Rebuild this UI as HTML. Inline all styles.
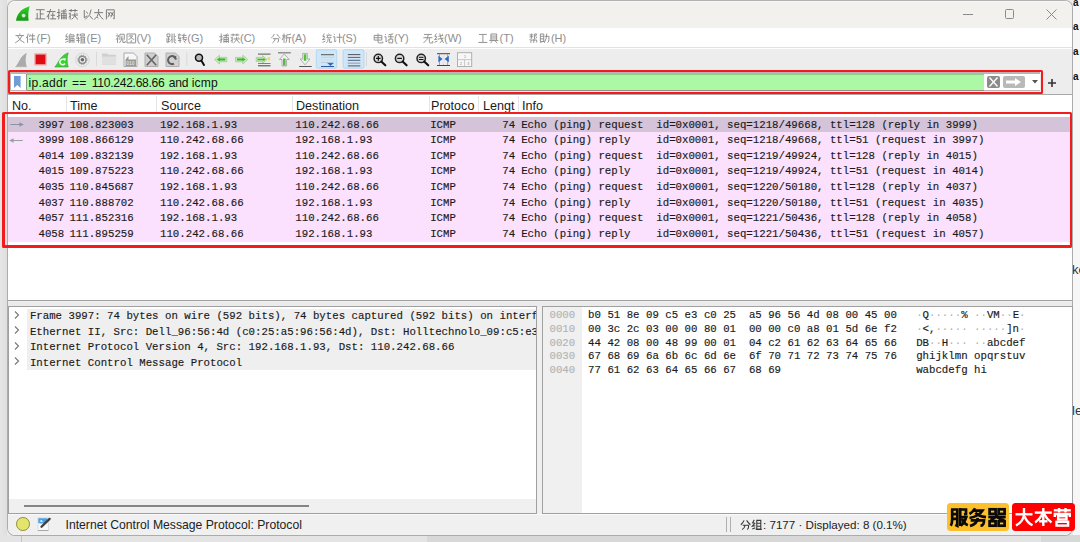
<!DOCTYPE html><html><head><meta charset="utf-8"><style>*{margin:0;padding:0;box-sizing:border-box}
html,body{width:1080px;height:542px;overflow:hidden;background:#ebebeb;font-family:"Liberation Sans",sans-serif;position:relative}
.a{position:absolute;white-space:pre}
.m{font-family:"Liberation Mono",monospace}
.pt{font-size:10.72px;line-height:14px;color:#1a1a1a;-webkit-text-stroke:0.15px #1a1a1a}
.sel{left:8px;width:1064px;height:15.6px;background:#d5c3d9}
.pk{left:8px;width:1064px;height:15.6px;background:#fbe1fd}
.menu{top:31px;font-size:11px;color:#8e8e8e;line-height:14px}
.hd{top:98.5px;font-size:12.6px;color:#1a1a1a;line-height:14px}
.dt{font-size:10.72px;line-height:14px;color:#1a1a1a;-webkit-text-stroke:0.15px #1a1a1a}
.bt{font-size:10.73px;line-height:13px;color:#1a1a1a;-webkit-text-stroke:0.15px #1a1a1a}
.off{color:#b4b4b4;-webkit-text-stroke:0.15px #b4b4b4}
.dot{color:#b0b0b0;-webkit-text-stroke:0 #b0b0b0}
</style></head><body>
<!-- desktop -->
<div class="a" style="left:0;top:0;width:7px;height:542px;background:linear-gradient(90deg,#e6e6e6,#dedede)"></div>
<div class="a" style="left:1073px;top:0;width:7px;height:542px;background:#f7f7f7"></div>
<div class="a" style="left:0;top:535px;width:1080px;height:7px;background:#d8d8d8"></div>
<div class="a" style="left:0;top:535px;width:427px;height:7px;background:#e4e4e4"></div>
<div class="a" style="left:970px;top:535px;width:71px;height:7px;background:#e3e3e3"></div>
<div class="a" style="left:21px;top:536px;width:1px;height:6px;background:#c4c4c4"></div>
<div class="a" style="left:1073px;top:-3px;font-size:10px;line-height:12px;color:#111;font-weight:bold">a</div>
<div class="a" style="left:1073px;top:21px;font-size:10px;line-height:12px;color:#111;font-weight:bold">a</div>
<div class="a" style="left:1073px;top:46px;font-size:10px;line-height:12px;color:#111;font-weight:bold">a</div>
<div class="a" style="left:1073px;top:71px;font-size:10px;line-height:12px;color:#111;font-weight:bold">a</div>
<div class="a" style="left:1072px;top:263px;font-size:13px;line-height:14px;color:#333">ke</div>
<div class="a" style="left:1072px;top:404px;font-size:13px;line-height:14px;color:#333">le</div>
<!-- window -->
<div class="a" style="left:7px;top:0px;width:1066px;height:535.5px;background:#f0f0f0;border:1px solid #acacac;border-top-color:#b2b2b2;border-radius:8px;overflow:hidden">
</div>
<!-- title bar -->
<div class="a" style="left:8px;top:1px;width:1064px;height:26.7px;background:#f2f1ed;border-radius:7px 7px 0 0;border-top:1px solid #f8f7f5"></div>
<svg class="a" style="left:0;top:0" width="40" height="28" viewBox="0 0 40 28">
  <defs><linearGradient id="gf" x1="0" y1="0" x2="0" y2="1"><stop offset="0" stop-color="#2fcf2a"/><stop offset="1" stop-color="#139a12"/></linearGradient></defs>
  <path d="M16 20.8 C16.8 14.5 20.5 9 29.6 6.3 C28.2 11 28.1 16 28.6 20.8 Z" fill="url(#gf)"/>
  <circle cx="23.6" cy="15.6" r="1.9" fill="#cfe8cf"/>
</svg>

<!-- window buttons -->
<div class="a" style="left:963px;top:14px;width:9.5px;height:1px;background:#8a8a8a"></div>
<div class="a" style="left:1004.5px;top:9px;width:9.5px;height:9.5px;border:1px solid #8a8a8a;border-radius:1.5px"></div>
<svg class="a" style="left:1046px;top:9px" width="11" height="11" viewBox="0 0 11 11"><path d="M0.5 0.5 L10.5 10.5 M10.5 0.5 L0.5 10.5" stroke="#8a8a8a" stroke-width="1"/></svg>
<!-- menu bar -->
<div class="a" style="left:8px;top:27.7px;width:1064px;height:19.3px;background:#fff"></div>
<div class="a menu" style="left:36.6px">(F)</div>
<div class="a menu" style="left:86.5px">(E)</div>
<div class="a menu" style="left:136.5px">(V)</div>
<div class="a menu" style="left:187.3px">(G)</div>
<div class="a menu" style="left:240.0px">(C)</div>
<div class="a menu" style="left:291.4px">(A)</div>
<div class="a menu" style="left:341.9px">(S)</div>
<div class="a menu" style="left:394.1px">(Y)</div>
<div class="a menu" style="left:444.0px">(W)</div>
<div class="a menu" style="left:499.6px">(T)</div>
<div class="a menu" style="left:550.9px">(H)</div>
<!-- toolbar -->
<div class="a" style="left:8px;top:47px;width:1064px;height:47px;background:#ededed"></div>
<div class="a" style="left:8px;top:47px;width:1064px;height:1px;background:#e2e2e2"></div>
<div class="a" style="left:8px;top:48px;width:1064px;height:1.3px;background:#fdfdfd"></div>
<svg class="a" style="left:0;top:0" width="480" height="70" viewBox="0 0 480 70">
 <!-- gray fin -->
 <path d="M15.2 67 C18.5 64 20 56 26.8 52.8 C25.3 57.5 25.3 62.5 26.8 67 Z" fill="#ababab"/><path d="M15.2 67 H26.8" stroke="#d0d0d0" stroke-width="0.6"/>
 <!-- red stop -->
 <rect x="34.2" y="53.2" width="12.6" height="12.4" fill="#eeb0b0"/>
 <rect x="35.6" y="54.6" width="9.8" height="9.6" fill="#de0c14"/>
 <!-- green fin restart -->
 <path d="M54.8 67 C58.2 64 59.5 56 68.2 52.8 C66.8 57.5 66.8 62.5 68.2 67 Z" fill="#36d52e" stroke="#4f8f4a" stroke-width="0.6"/>
 <path d="M64.5 59.8 A2.8 2.8 0 1 0 65 63.5" fill="none" stroke="#f2fff2" stroke-width="1.5"/>
 <path d="M63.2 58.2 L66.2 58.6 L64.8 61.2 Z" fill="#f2fff2"/>
 <!-- gear -->
 <circle cx="82.4" cy="59.8" r="6.8" fill="#eeeeee" stroke="#d2d2d2" stroke-width="0.9"/>
 <circle cx="82.4" cy="59.8" r="4.6" fill="none" stroke="#9a9a9a" stroke-width="1" stroke-dasharray="1.4 1"/>
 <circle cx="82.4" cy="59.8" r="3.6" fill="none" stroke="#8a8a8a" stroke-width="1.5"/>
 <circle cx="82.4" cy="59.8" r="1.8" fill="#666"/>
 <!-- separator -->
 <rect x="96" y="52" width="1" height="14" fill="#d9d9d9"/>
 <!-- folder -->
 <path d="M102 53.5 H107 L108.5 54.8 H116 V64.7 H102 Z" fill="#cfcfcf"/>
 <rect x="102" y="56.5" width="14.2" height="8.2" fill="#e0e0e0"/>
 <!-- 010 file -->
 <path d="M124 53 H133.5 L137 56.5 V66.5 H124 Z" fill="#f7f7f7" stroke="#a3a3a3" stroke-width="0.9"/>
 <path d="M125.5 59.5 L128.5 56 V59.5 H136 V66 H125.5 Z" fill="#9a9a9a"/>
 <text x="130.5" y="65.3" font-size="4.6" font-family="Liberation Mono" text-anchor="middle" fill="#f0f0f0">010</text>
 <!-- close file -->
 <path d="M145 53 H154.5 L158 56.5 V66.5 H145 Z" fill="#cfcfcf" stroke="#a9a9a9" stroke-width="0.9"/>
 <path d="M146.8 54.8 L156.2 65.2 M156.2 54.8 L146.8 65.2" stroke="#666" stroke-width="1.7"/>
 <!-- reload file -->
 <path d="M166 53 H175.5 L179 56.5 V66.5 H166 Z" fill="#d2d2d2" stroke="#a9a9a9" stroke-width="0.9"/>
 <path d="M176 59.5 A4 4 0 1 0 174 63.6" fill="none" stroke="#5e5e5e" stroke-width="2"/>
 <path d="M172 55.5 L176.5 56 L175 59.5 Z" fill="#5e5e5e"/>
 <!-- separator -->
 <rect x="186.3" y="52" width="1" height="14" fill="#d9d9d9"/>
 <!-- find -->
 <circle cx="199" cy="57.8" r="3.5" fill="#bdbdbd" stroke="#111" stroke-width="1.5"/>
 <path d="M201.3 60.5 L204 65" stroke="#111" stroke-width="2" stroke-linecap="round"/>
 <!-- back -->
 <path d="M214.6 59.6 L219.5 55.2 V57.4 H226.8 V61.8 H219.5 V64 Z" fill="#c4ecb4" stroke="#a3c99a" stroke-width="0.8"/>
 <path d="M216.8 59.6 L219.8 57.6 V58.6 H225.3 V60.6 H219.8 V61.6 Z" fill="#3ab52c"/>
 <!-- forward -->
 <path d="M247.7 59.6 L242.8 55.2 V57.4 H235.5 V61.8 H242.8 V64 Z" fill="#c4ecb4" stroke="#a3c99a" stroke-width="0.8"/>
 <path d="M245.5 59.6 L242.5 57.6 V58.6 H237 V60.6 H242.5 V61.6 Z" fill="#3ab52c"/>
 <!-- go to packet -->
 <rect x="258" y="53.6" width="12.5" height="1" fill="#555"/>
 <path d="M256.2 57.4 H262.5 V55.6 L267 59.5 L262.5 63.4 V61.6 H256.2 Z" fill="#c4ecb4" stroke="#a3c99a" stroke-width="0.8"/>
 <path d="M257.5 58.7 H263.5 V57.8 L265.5 59.5 L263.5 61.2 V60.3 H257.5 Z" fill="#3ab52c"/>
 <rect x="267.5" y="57.3" width="2.6" height="3" fill="#e8e14a"/>
 <rect x="258" y="63" width="12.5" height="0.9" fill="#777"/>
 <rect x="258" y="65.3" width="12.5" height="1" fill="#444"/>
 <!-- first packet -->
 <rect x="278" y="52.4" width="12.8" height="0.9" fill="#555"/>
 <path d="M284.3 54 L289.2 59.5 H286.6 V66 H282 V59.5 H279.4 Z" fill="#f2f2f2" stroke="#a0a0a0" stroke-width="0.8"/>
 <rect x="283" y="58.5" width="2.6" height="7" fill="#4fbf3c"/>
 <!-- last packet -->
 <path d="M305 64.8 L309.9 59 H307.3 V53.4 H302.7 V59 H300.1 Z" fill="#f2f2f2" stroke="#a0a0a0" stroke-width="0.8"/>
 <rect x="303.8" y="54.3" width="2.5" height="6.5" fill="#4fbf3c"/>
 <rect x="299.2" y="66" width="12.5" height="0.9" fill="#444"/>
 <!-- autoscroll (toggled) -->
 <rect x="316.3" y="49.7" width="20.4" height="18.5" rx="1.5" fill="#cde6f8" stroke="#a9d3f3" stroke-width="0.8"/>
 <rect x="321" y="54.2" width="13" height="1" fill="#555"/>
 <rect x="321" y="56.8" width="13" height="0.9" fill="#cfcfc0"/>
 <rect x="321" y="59.4" width="13" height="0.9" fill="#d9e0c8"/>
 <rect x="321" y="62" width="7" height="0.9" fill="#c8c8d8"/>
 <path d="M327 62.8 H334 L330.5 66 Z" fill="#2f6fc0"/>
 <rect x="321" y="66" width="13" height="1" fill="#2d5aa0"/>
 <!-- colorize (toggled) -->
 <rect x="343.1" y="49.7" width="20.9" height="18.5" rx="1.5" fill="#cde6f8" stroke="#a9d3f3" stroke-width="0.8"/>
 <rect x="347.8" y="54.1" width="12.5" height="1" fill="#555"/>
 <rect x="347.8" y="56.9" width="12.5" height="1" fill="#d43535"/>
 <rect x="347.8" y="59.8" width="12.5" height="1" fill="#4a6480"/>
 <rect x="347.8" y="62.6" width="12.5" height="1.1" fill="#a898a8"/>
 <rect x="347.8" y="65.4" width="12.5" height="1" fill="#555"/>
 <!-- separator -->
 <rect x="366" y="52" width="1" height="14" fill="#d9d9d9"/>
 <!-- zoom in -->
 <circle cx="378.3" cy="58.4" r="4.2" fill="#d8d8d8" stroke="#222" stroke-width="1.5"/>
 <path d="M381.3 61.5 L385.3 65.3" stroke="#111" stroke-width="2.1" stroke-linecap="round"/>
 <path d="M376 58.4 H380.6 M378.3 56.1 V60.7" stroke="#111" stroke-width="1.2"/>
 <!-- zoom out -->
 <circle cx="399.6" cy="58.4" r="4.2" fill="#d8d8d8" stroke="#222" stroke-width="1.5"/>
 <path d="M402.6 61.5 L406.6 65.3" stroke="#111" stroke-width="2.1" stroke-linecap="round"/>
 <path d="M397.3 58.4 H401.9" stroke="#111" stroke-width="1.2"/>
 <!-- zoom normal -->
 <circle cx="421.2" cy="58.4" r="4.2" fill="#d8d8d8" stroke="#222" stroke-width="1.5"/>
 <path d="M424.2 61.5 L428.2 65.3" stroke="#111" stroke-width="2.1" stroke-linecap="round"/>
 <path d="M418.9 57.3 H423.5 M418.9 59.5 H423.5" stroke="#111" stroke-width="1"/>
 <!-- resize columns -->
 <rect x="437" y="53.2" width="13" height="1" fill="#444"/>
 <rect x="437" y="65" width="13" height="1" fill="#444"/>
 <rect x="439" y="54.2" width="0.9" height="10.8" fill="#999"/>
 <rect x="443" y="54.2" width="1" height="10.8" fill="#ccc"/>
 <rect x="447.2" y="54.2" width="0.9" height="10.8" fill="#999"/>
 <path d="M438.4 55.8 L442.6 59 L438.4 62.2 Z" fill="#2e67c4"/>
 <path d="M448.8 55.8 L444.6 59 L448.8 62.2 Z" fill="#2e67c4"/>
 <rect x="442.8" y="55" width="1.6" height="9" fill="#dde6f0"/>
 <!-- layout -->
 <rect x="457.5" y="52.7" width="14.2" height="13.8" fill="#f7f7f7" stroke="#a8a8a8" stroke-width="0.9"/>
 <rect x="457.5" y="59.3" width="14.2" height="0.8" fill="#bbb"/>
 <rect x="464.3" y="59.5" width="0.8" height="7" fill="#bbb"/>
 <text x="465" y="58" font-size="3.6" font-family="Liberation Sans" text-anchor="middle" fill="#888">1</text>
 <text x="461" y="64.5" font-size="3.6" font-family="Liberation Sans" text-anchor="middle" fill="#888">2</text>
 <text x="468.3" y="64.5" font-size="3.6" font-family="Liberation Sans" text-anchor="middle" fill="#888">3</text>
</svg>

<!-- filter -->
<div class="a" style="left:8px;top:69.6px;width:1034.8px;height:24px;border:2.4px solid #f21c1c;border-radius:1.5px"></div>
<div class="a" style="left:10.4px;top:72px;width:1029.8px;height:19.2px;background:#bdb3b3"></div>
<div class="a" style="left:11px;top:74.3px;width:1028.6px;height:15.6px;background:#fff"></div>
<div class="a" style="left:25.9px;top:74.3px;width:1px;height:15.6px;background:#8c9c8c"></div>
<div class="a" style="left:26.9px;top:74px;width:957.5px;height:16.9px;background:#abf9a4;border-top:1.2px solid #8fd08b;border-bottom:1.2px solid #9a8c8c"></div>
<svg class="a" style="left:14px;top:76px" width="7" height="12" viewBox="0 0 7 12"><path d="M0 0 H6.6 V12 L3.3 9 L0 12 Z" fill="#6e9dd7"/></svg>
<div class="a" style="left:28.6px;top:75.8px;font-size:12.1px;line-height:14px;color:#111;letter-spacing:0.25px">ip.addr</div><div class="a" style="left:72.1px;top:75.8px;font-size:12.1px;line-height:14px;color:#111;letter-spacing:0px">==</div><div class="a" style="left:91.8px;top:75.8px;font-size:12.1px;line-height:14px;color:#111;letter-spacing:-0.29px">110.242.68.66</div><div class="a" style="left:168.7px;top:75.8px;font-size:12.1px;line-height:14px;color:#111;letter-spacing:-0.2px">and</div><div class="a" style="left:191.8px;top:75.8px;font-size:12.1px;line-height:14px;color:#111;letter-spacing:0.1px">icmp</div>
<div class="a" style="left:987px;top:76px;width:13px;height:12px;background:#8c8c8c;border-radius:2px"></div>
<svg class="a" style="left:987px;top:76px" width="13" height="12" viewBox="0 0 13 12"><path d="M2.5 1.5 L10.5 10.5 M10.5 1.5 L2.5 10.5" stroke="#fff" stroke-width="1.3"/></svg>
<div class="a" style="left:1003px;top:76px;width:21.5px;height:12px;background:#b9b9b9;border-radius:2px"></div>
<svg class="a" style="left:1003px;top:76px" width="22" height="12" viewBox="0 0 22 12"><path d="M3 4.5 H12 V2 L18 6 L12 10 V7.5 H3 Z" fill="#fff"/></svg>
<svg class="a" style="left:1032px;top:80px" width="6" height="3.5" viewBox="0 0 6 3.5"><path d="M0 0 H6 L3 3.5 Z" fill="#555"/></svg>
<svg class="a" style="left:1047.5px;top:78.5px" width="8" height="8" viewBox="0 0 8 8"><path d="M4 0 V8 M0 4 H8" stroke="#333" stroke-width="1.6"/></svg>
<!-- packet list -->
<div class="a" style="left:8px;top:93.8px;width:1064px;height:207.7px;background:#fff;border-top:1px solid #a9a9a9;border-bottom:1px solid #a0a0a0"></div>
<div class="a hd" style="left:12px">No.</div>
<div class="a hd" style="left:70px">Time</div>
<div class="a hd" style="left:161px">Source</div>
<div class="a hd" style="left:296px">Destination</div>
<div class="a hd" style="left:431px">Protoco</div>
<div class="a hd" style="left:483px">Lengt</div>
<div class="a hd" style="left:522px">Info</div>
<div class="a" style="left:66px;top:96px;width:1px;height:17px;background:#e5e5e5"></div>
<div class="a" style="left:156px;top:96px;width:1px;height:17px;background:#e5e5e5"></div>
<div class="a" style="left:292px;top:96px;width:1px;height:17px;background:#e5e5e5"></div>
<div class="a" style="left:429px;top:96px;width:1px;height:17px;background:#e5e5e5"></div>
<div class="a" style="left:478px;top:96px;width:1px;height:17px;background:#e5e5e5"></div>
<div class="a" style="left:518px;top:96px;width:1px;height:17px;background:#e5e5e5"></div>
<div class="a pk" style="top:116.90px;height:124.80px"></div>
<div class="a sel" style="top:116.90px;height:15.60px"></div>
<div class="a m pt" style="top:117.50px;left:38.47px">3997</div>
<div class="a m pt" style="top:117.50px;left:69.40px">108.823003</div>
<div class="a m pt" style="top:117.50px;left:160.00px">192.168.1.93</div>
<div class="a m pt" style="top:117.50px;left:295.30px">110.242.68.66</div>
<div class="a m pt" style="top:117.50px;left:430.20px">ICMP</div>
<div class="a m pt" style="top:117.50px;left:502.24px">74</div>
<div class="a m pt" style="top:117.50px;left:521.20px">Echo</div>
<div class="a m pt" style="top:117.50px;left:553.36px">(ping)</div>
<div class="a m pt" style="top:117.50px;left:598.39px">request</div>
<div class="a m pt" style="top:117.50px;left:656.28px">id=0x0001,</div>
<div class="a m pt" style="top:117.50px;left:727.04px">seq=1218/49668,</div>
<div class="a m pt" style="top:117.50px;left:829.95px">ttl=128</div>
<div class="a m pt" style="top:117.50px;left:881.41px">(reply</div>
<div class="a m pt" style="top:117.50px;left:926.44px">in</div>
<div class="a m pt" style="top:117.50px;left:945.73px">3999)</div>
<div class="a m pt" style="top:133.10px;left:38.47px">3999</div>
<div class="a m pt" style="top:133.10px;left:69.40px">108.866129</div>
<div class="a m pt" style="top:133.10px;left:160.00px">110.242.68.66</div>
<div class="a m pt" style="top:133.10px;left:295.30px">192.168.1.93</div>
<div class="a m pt" style="top:133.10px;left:430.20px">ICMP</div>
<div class="a m pt" style="top:133.10px;left:502.24px">74</div>
<div class="a m pt" style="top:133.10px;left:521.20px">Echo</div>
<div class="a m pt" style="top:133.10px;left:553.36px">(ping)</div>
<div class="a m pt" style="top:133.10px;left:598.39px">reply</div>
<div class="a m pt" style="top:133.10px;left:656.28px">id=0x0001,</div>
<div class="a m pt" style="top:133.10px;left:727.04px">seq=1218/49668,</div>
<div class="a m pt" style="top:133.10px;left:829.95px">ttl=51</div>
<div class="a m pt" style="top:133.10px;left:874.98px">(request</div>
<div class="a m pt" style="top:133.10px;left:932.87px">in</div>
<div class="a m pt" style="top:133.10px;left:952.17px">3997)</div>
<div class="a m pt" style="top:148.70px;left:38.47px">4014</div>
<div class="a m pt" style="top:148.70px;left:69.40px">109.832139</div>
<div class="a m pt" style="top:148.70px;left:160.00px">192.168.1.93</div>
<div class="a m pt" style="top:148.70px;left:295.30px">110.242.68.66</div>
<div class="a m pt" style="top:148.70px;left:430.20px">ICMP</div>
<div class="a m pt" style="top:148.70px;left:502.24px">74</div>
<div class="a m pt" style="top:148.70px;left:521.20px">Echo</div>
<div class="a m pt" style="top:148.70px;left:553.36px">(ping)</div>
<div class="a m pt" style="top:148.70px;left:598.39px">request</div>
<div class="a m pt" style="top:148.70px;left:656.28px">id=0x0001,</div>
<div class="a m pt" style="top:148.70px;left:727.04px">seq=1219/49924,</div>
<div class="a m pt" style="top:148.70px;left:829.95px">ttl=128</div>
<div class="a m pt" style="top:148.70px;left:881.41px">(reply</div>
<div class="a m pt" style="top:148.70px;left:926.44px">in</div>
<div class="a m pt" style="top:148.70px;left:945.73px">4015)</div>
<div class="a m pt" style="top:164.30px;left:38.47px">4015</div>
<div class="a m pt" style="top:164.30px;left:69.40px">109.875223</div>
<div class="a m pt" style="top:164.30px;left:160.00px">110.242.68.66</div>
<div class="a m pt" style="top:164.30px;left:295.30px">192.168.1.93</div>
<div class="a m pt" style="top:164.30px;left:430.20px">ICMP</div>
<div class="a m pt" style="top:164.30px;left:502.24px">74</div>
<div class="a m pt" style="top:164.30px;left:521.20px">Echo</div>
<div class="a m pt" style="top:164.30px;left:553.36px">(ping)</div>
<div class="a m pt" style="top:164.30px;left:598.39px">reply</div>
<div class="a m pt" style="top:164.30px;left:656.28px">id=0x0001,</div>
<div class="a m pt" style="top:164.30px;left:727.04px">seq=1219/49924,</div>
<div class="a m pt" style="top:164.30px;left:829.95px">ttl=51</div>
<div class="a m pt" style="top:164.30px;left:874.98px">(request</div>
<div class="a m pt" style="top:164.30px;left:932.87px">in</div>
<div class="a m pt" style="top:164.30px;left:952.17px">4014)</div>
<div class="a m pt" style="top:179.90px;left:38.47px">4035</div>
<div class="a m pt" style="top:179.90px;left:69.40px">110.845687</div>
<div class="a m pt" style="top:179.90px;left:160.00px">192.168.1.93</div>
<div class="a m pt" style="top:179.90px;left:295.30px">110.242.68.66</div>
<div class="a m pt" style="top:179.90px;left:430.20px">ICMP</div>
<div class="a m pt" style="top:179.90px;left:502.24px">74</div>
<div class="a m pt" style="top:179.90px;left:521.20px">Echo</div>
<div class="a m pt" style="top:179.90px;left:553.36px">(ping)</div>
<div class="a m pt" style="top:179.90px;left:598.39px">request</div>
<div class="a m pt" style="top:179.90px;left:656.28px">id=0x0001,</div>
<div class="a m pt" style="top:179.90px;left:727.04px">seq=1220/50180,</div>
<div class="a m pt" style="top:179.90px;left:829.95px">ttl=128</div>
<div class="a m pt" style="top:179.90px;left:881.41px">(reply</div>
<div class="a m pt" style="top:179.90px;left:926.44px">in</div>
<div class="a m pt" style="top:179.90px;left:945.73px">4037)</div>
<div class="a m pt" style="top:195.50px;left:38.47px">4037</div>
<div class="a m pt" style="top:195.50px;left:69.40px">110.888702</div>
<div class="a m pt" style="top:195.50px;left:160.00px">110.242.68.66</div>
<div class="a m pt" style="top:195.50px;left:295.30px">192.168.1.93</div>
<div class="a m pt" style="top:195.50px;left:430.20px">ICMP</div>
<div class="a m pt" style="top:195.50px;left:502.24px">74</div>
<div class="a m pt" style="top:195.50px;left:521.20px">Echo</div>
<div class="a m pt" style="top:195.50px;left:553.36px">(ping)</div>
<div class="a m pt" style="top:195.50px;left:598.39px">reply</div>
<div class="a m pt" style="top:195.50px;left:656.28px">id=0x0001,</div>
<div class="a m pt" style="top:195.50px;left:727.04px">seq=1220/50180,</div>
<div class="a m pt" style="top:195.50px;left:829.95px">ttl=51</div>
<div class="a m pt" style="top:195.50px;left:874.98px">(request</div>
<div class="a m pt" style="top:195.50px;left:932.87px">in</div>
<div class="a m pt" style="top:195.50px;left:952.17px">4035)</div>
<div class="a m pt" style="top:211.10px;left:38.47px">4057</div>
<div class="a m pt" style="top:211.10px;left:69.40px">111.852316</div>
<div class="a m pt" style="top:211.10px;left:160.00px">192.168.1.93</div>
<div class="a m pt" style="top:211.10px;left:295.30px">110.242.68.66</div>
<div class="a m pt" style="top:211.10px;left:430.20px">ICMP</div>
<div class="a m pt" style="top:211.10px;left:502.24px">74</div>
<div class="a m pt" style="top:211.10px;left:521.20px">Echo</div>
<div class="a m pt" style="top:211.10px;left:553.36px">(ping)</div>
<div class="a m pt" style="top:211.10px;left:598.39px">request</div>
<div class="a m pt" style="top:211.10px;left:656.28px">id=0x0001,</div>
<div class="a m pt" style="top:211.10px;left:727.04px">seq=1221/50436,</div>
<div class="a m pt" style="top:211.10px;left:829.95px">ttl=128</div>
<div class="a m pt" style="top:211.10px;left:881.41px">(reply</div>
<div class="a m pt" style="top:211.10px;left:926.44px">in</div>
<div class="a m pt" style="top:211.10px;left:945.73px">4058)</div>
<div class="a m pt" style="top:226.70px;left:38.47px">4058</div>
<div class="a m pt" style="top:226.70px;left:69.40px">111.895259</div>
<div class="a m pt" style="top:226.70px;left:160.00px">110.242.68.66</div>
<div class="a m pt" style="top:226.70px;left:295.30px">192.168.1.93</div>
<div class="a m pt" style="top:226.70px;left:430.20px">ICMP</div>
<div class="a m pt" style="top:226.70px;left:502.24px">74</div>
<div class="a m pt" style="top:226.70px;left:521.20px">Echo</div>
<div class="a m pt" style="top:226.70px;left:553.36px">(ping)</div>
<div class="a m pt" style="top:226.70px;left:598.39px">reply</div>
<div class="a m pt" style="top:226.70px;left:656.28px">id=0x0001,</div>
<div class="a m pt" style="top:226.70px;left:727.04px">seq=1221/50436,</div>
<div class="a m pt" style="top:226.70px;left:829.95px">ttl=51</div>
<div class="a m pt" style="top:226.70px;left:874.98px">(request</div>
<div class="a m pt" style="top:226.70px;left:932.87px">in</div>
<div class="a m pt" style="top:226.70px;left:952.17px">4057)</div>
<svg class="a" style="left:0;top:110px" width="30" height="40" viewBox="0 110 30 40">
 <path d="M10.3 124.5 H20" stroke="#8c93a0" stroke-width="1"/>
 <path d="M19.4 122.3 L23.8 124.5 L19.4 126.7 Z" fill="#8c93a0"/>
 <path d="M13.2 140.5 H22.8" stroke="#95a0a0" stroke-width="1"/>
 <path d="M13.6 138.3 L9.2 140.5 L13.6 142.7 Z" fill="#95a0a0"/>
</svg>
<div class="a" style="left:2.3px;top:111.8px;width:1069.5px;height:136px;border:solid #f21c1c;border-width:2.7px 2.6px 3.3px 3.4px;border-radius:1.5px"></div>
<!-- splitter -->
<div class="a" style="left:8px;top:301.5px;width:1064px;height:5px;background:#ebebeb"></div>
<!-- details pane -->
<div class="a" style="left:7.5px;top:306px;width:529.5px;height:208px;background:#fff;border:1px solid #a0a0a0;border-right-color:#a0a0a0"></div>
<div class="a" style="left:27px;top:308.5px;width:508.8px;height:61px;background:#efefef"></div>
<div class="a" style="left:26.5px;top:307px;width:509.3px;height:190px;overflow:hidden">
<div class="a m dt" style="top:2.00px;left:3.40px">Frame</div>
<div class="a m dt" style="top:2.00px;left:41.99px">3997:</div>
<div class="a m dt" style="top:2.00px;left:80.59px">74</div>
<div class="a m dt" style="top:2.00px;left:99.89px">bytes</div>
<div class="a m dt" style="top:2.00px;left:138.48px">on</div>
<div class="a m dt" style="top:2.00px;left:157.78px">wire</div>
<div class="a m dt" style="top:2.00px;left:189.94px">(592</div>
<div class="a m dt" style="top:2.00px;left:222.10px">bits),</div>
<div class="a m dt" style="top:2.00px;left:267.13px">74</div>
<div class="a m dt" style="top:2.00px;left:286.42px">bytes</div>
<div class="a m dt" style="top:2.00px;left:325.02px">captured</div>
<div class="a m dt" style="top:2.00px;left:382.91px">(592</div>
<div class="a m dt" style="top:2.00px;left:415.07px">bits)</div>
<div class="a m dt" style="top:2.00px;left:453.66px">on</div>
<div class="a m dt" style="top:2.00px;left:472.96px">interface</div>
<div class="a m dt" style="top:2.00px;left:537.28px">\Device\NPF_{...},</div>
<div class="a m dt" style="top:2.00px;left:659.50px">id</div>
<div class="a m dt" style="top:2.00px;left:678.80px">0</div>
<div class="a m dt" style="top:17.50px;left:3.40px">Ethernet</div>
<div class="a m dt" style="top:17.50px;left:61.29px">II,</div>
<div class="a m dt" style="top:17.50px;left:87.02px">Src:</div>
<div class="a m dt" style="top:17.50px;left:119.18px">Dell_96:56:4d</div>
<div class="a m dt" style="top:17.50px;left:209.24px">(c0:25:a5:96:56:4d),</div>
<div class="a m dt" style="top:17.50px;left:344.31px">Dst:</div>
<div class="a m dt" style="top:17.50px;left:376.48px">Holltechnolo_09:c5:e3</div>
<div class="a m dt" style="top:17.50px;left:517.99px">(b0:51:8e:09:c5:e3)</div>
<div class="a m dt" style="top:33.00px;left:3.40px">Internet</div>
<div class="a m dt" style="top:33.00px;left:61.29px">Protocol</div>
<div class="a m dt" style="top:33.00px;left:119.18px">Version</div>
<div class="a m dt" style="top:33.00px;left:170.64px">4,</div>
<div class="a m dt" style="top:33.00px;left:189.94px">Src:</div>
<div class="a m dt" style="top:33.00px;left:222.10px">192.168.1.93,</div>
<div class="a m dt" style="top:33.00px;left:312.15px">Dst:</div>
<div class="a m dt" style="top:33.00px;left:344.31px">110.242.68.66</div>
<div class="a m dt" style="top:48.50px;left:3.40px">Internet</div>
<div class="a m dt" style="top:48.50px;left:61.29px">Control</div>
<div class="a m dt" style="top:48.50px;left:112.75px">Message</div>
<div class="a m dt" style="top:48.50px;left:164.21px">Protocol</div>
</div>
<svg class="a" style="left:13.8px;top:310.90px" width="6" height="8" viewBox="0 0 6 8"><path d="M1 0.5 L4.5 4 L1 7.5" stroke="#777" stroke-width="1.1" fill="none"/></svg>
<svg class="a" style="left:13.8px;top:326.40px" width="6" height="8" viewBox="0 0 6 8"><path d="M1 0.5 L4.5 4 L1 7.5" stroke="#777" stroke-width="1.1" fill="none"/></svg>
<svg class="a" style="left:13.8px;top:341.90px" width="6" height="8" viewBox="0 0 6 8"><path d="M1 0.5 L4.5 4 L1 7.5" stroke="#777" stroke-width="1.1" fill="none"/></svg>
<svg class="a" style="left:13.8px;top:357.40px" width="6" height="8" viewBox="0 0 6 8"><path d="M1 0.5 L4.5 4 L1 7.5" stroke="#777" stroke-width="1.1" fill="none"/></svg>
<div class="a" style="left:8.5px;top:498.5px;width:527.5px;height:14.5px;background:#f0f0f0"></div>
<div class="a" style="left:24px;top:505px;width:285px;height:2px;background:#858585"></div>
<!-- bytes pane -->
<div class="a" style="left:542px;top:306px;width:531px;height:208px;background:#fff;border:1px solid #a0a0a0"></div>
<div class="a" style="left:543px;top:307px;width:38.5px;height:206px;background:#f0f0f0"></div>
<div class="a m bt off" style="top:309.00px;left:549.50px">0000</div>
<div class="a m bt" style="top:309.00px;left:588.09px">b0</div>
<div class="a m bt" style="top:309.00px;left:607.39px">51</div>
<div class="a m bt" style="top:309.00px;left:626.69px">8e</div>
<div class="a m bt" style="top:309.00px;left:645.99px">09</div>
<div class="a m bt" style="top:309.00px;left:665.28px">c5</div>
<div class="a m bt" style="top:309.00px;left:684.58px">e3</div>
<div class="a m bt" style="top:309.00px;left:703.88px">c0</div>
<div class="a m bt" style="top:309.00px;left:723.17px">25</div>
<div class="a m bt" style="top:309.00px;left:748.90px">a5</div>
<div class="a m bt" style="top:309.00px;left:768.20px">96</div>
<div class="a m bt" style="top:309.00px;left:787.50px">56</div>
<div class="a m bt" style="top:309.00px;left:806.79px">4d</div>
<div class="a m bt" style="top:309.00px;left:826.09px">08</div>
<div class="a m bt" style="top:309.00px;left:845.39px">00</div>
<div class="a m bt" style="top:309.00px;left:864.68px">45</div>
<div class="a m bt" style="top:309.00px;left:883.98px">00</div>
<div class="a m bt dot" style="top:309.00px;left:916.14px">·</div>
<div class="a m bt" style="top:309.00px;left:922.58px">Q</div>
<div class="a m bt dot" style="top:309.00px;left:929.01px">·····</div>
<div class="a m bt" style="top:309.00px;left:961.17px">%</div>
<div class="a m bt dot" style="top:309.00px;left:974.03px">··</div>
<div class="a m bt" style="top:309.00px;left:986.90px">VM</div>
<div class="a m bt dot" style="top:309.00px;left:999.76px">··</div>
<div class="a m bt" style="top:309.00px;left:1012.63px">E</div>
<div class="a m bt dot" style="top:309.00px;left:1019.06px">·</div>
<div class="a m bt off" style="top:322.83px;left:549.50px">0010</div>
<div class="a m bt" style="top:322.83px;left:588.09px">00</div>
<div class="a m bt" style="top:322.83px;left:607.39px">3c</div>
<div class="a m bt" style="top:322.83px;left:626.69px">2c</div>
<div class="a m bt" style="top:322.83px;left:645.99px">03</div>
<div class="a m bt" style="top:322.83px;left:665.28px">00</div>
<div class="a m bt" style="top:322.83px;left:684.58px">00</div>
<div class="a m bt" style="top:322.83px;left:703.88px">80</div>
<div class="a m bt" style="top:322.83px;left:723.17px">01</div>
<div class="a m bt" style="top:322.83px;left:748.90px">00</div>
<div class="a m bt" style="top:322.83px;left:768.20px">00</div>
<div class="a m bt" style="top:322.83px;left:787.50px">c0</div>
<div class="a m bt" style="top:322.83px;left:806.79px">a8</div>
<div class="a m bt" style="top:322.83px;left:826.09px">01</div>
<div class="a m bt" style="top:322.83px;left:845.39px">5d</div>
<div class="a m bt" style="top:322.83px;left:864.68px">6e</div>
<div class="a m bt" style="top:322.83px;left:883.98px">f2</div>
<div class="a m bt dot" style="top:322.83px;left:916.14px">·</div>
<div class="a m bt" style="top:322.83px;left:922.58px">&lt;,</div>
<div class="a m bt dot" style="top:322.83px;left:935.44px">·····</div>
<div class="a m bt dot" style="top:322.83px;left:974.03px">·····</div>
<div class="a m bt" style="top:322.83px;left:1006.20px">]n</div>
<div class="a m bt dot" style="top:322.83px;left:1019.06px">·</div>
<div class="a m bt off" style="top:336.66px;left:549.50px">0020</div>
<div class="a m bt" style="top:336.66px;left:588.09px">44</div>
<div class="a m bt" style="top:336.66px;left:607.39px">42</div>
<div class="a m bt" style="top:336.66px;left:626.69px">08</div>
<div class="a m bt" style="top:336.66px;left:645.99px">00</div>
<div class="a m bt" style="top:336.66px;left:665.28px">48</div>
<div class="a m bt" style="top:336.66px;left:684.58px">99</div>
<div class="a m bt" style="top:336.66px;left:703.88px">00</div>
<div class="a m bt" style="top:336.66px;left:723.17px">01</div>
<div class="a m bt" style="top:336.66px;left:748.90px">04</div>
<div class="a m bt" style="top:336.66px;left:768.20px">c2</div>
<div class="a m bt" style="top:336.66px;left:787.50px">61</div>
<div class="a m bt" style="top:336.66px;left:806.79px">62</div>
<div class="a m bt" style="top:336.66px;left:826.09px">63</div>
<div class="a m bt" style="top:336.66px;left:845.39px">64</div>
<div class="a m bt" style="top:336.66px;left:864.68px">65</div>
<div class="a m bt" style="top:336.66px;left:883.98px">66</div>
<div class="a m bt" style="top:336.66px;left:916.14px">DB</div>
<div class="a m bt dot" style="top:336.66px;left:929.01px">··</div>
<div class="a m bt" style="top:336.66px;left:941.87px">H</div>
<div class="a m bt dot" style="top:336.66px;left:948.31px">···</div>
<div class="a m bt dot" style="top:336.66px;left:974.03px">··</div>
<div class="a m bt" style="top:336.66px;left:986.90px">abcdef</div>
<div class="a m bt off" style="top:350.49px;left:549.50px">0030</div>
<div class="a m bt" style="top:350.49px;left:588.09px">67</div>
<div class="a m bt" style="top:350.49px;left:607.39px">68</div>
<div class="a m bt" style="top:350.49px;left:626.69px">69</div>
<div class="a m bt" style="top:350.49px;left:645.99px">6a</div>
<div class="a m bt" style="top:350.49px;left:665.28px">6b</div>
<div class="a m bt" style="top:350.49px;left:684.58px">6c</div>
<div class="a m bt" style="top:350.49px;left:703.88px">6d</div>
<div class="a m bt" style="top:350.49px;left:723.17px">6e</div>
<div class="a m bt" style="top:350.49px;left:748.90px">6f</div>
<div class="a m bt" style="top:350.49px;left:768.20px">70</div>
<div class="a m bt" style="top:350.49px;left:787.50px">71</div>
<div class="a m bt" style="top:350.49px;left:806.79px">72</div>
<div class="a m bt" style="top:350.49px;left:826.09px">73</div>
<div class="a m bt" style="top:350.49px;left:845.39px">74</div>
<div class="a m bt" style="top:350.49px;left:864.68px">75</div>
<div class="a m bt" style="top:350.49px;left:883.98px">76</div>
<div class="a m bt" style="top:350.49px;left:916.14px">ghijklmn</div>
<div class="a m bt" style="top:350.49px;left:974.03px">opqrstuv</div>
<div class="a m bt off" style="top:364.32px;left:549.50px">0040</div>
<div class="a m bt" style="top:364.32px;left:588.09px">77</div>
<div class="a m bt" style="top:364.32px;left:607.39px">61</div>
<div class="a m bt" style="top:364.32px;left:626.69px">62</div>
<div class="a m bt" style="top:364.32px;left:645.99px">63</div>
<div class="a m bt" style="top:364.32px;left:665.28px">64</div>
<div class="a m bt" style="top:364.32px;left:684.58px">65</div>
<div class="a m bt" style="top:364.32px;left:703.88px">66</div>
<div class="a m bt" style="top:364.32px;left:723.17px">67</div>
<div class="a m bt" style="top:364.32px;left:748.90px">68</div>
<div class="a m bt" style="top:364.32px;left:768.20px">69</div>
<div class="a m bt" style="top:364.32px;left:916.14px">wabcdefg</div>
<div class="a m bt" style="top:364.32px;left:974.03px">hi</div>
<!-- status bar -->
<div class="a" style="left:8px;top:514px;width:1064px;height:20.5px;background:#f0f0f0;border-radius:0 0 7px 7px;border-top:1px solid #fafafa"></div>
<div class="a" style="left:16px;top:517.3px;width:13.8px;height:13.8px;border-radius:50%;background:#e4e46c;border:1px solid #8f8f3c"></div>
<svg class="a" style="left:0;top:500px" width="60" height="42" viewBox="0 500 60 42">
 <rect x="38" y="518" width="10.4" height="12.4" fill="#f6f8fa" stroke="#c9ced3" stroke-width="0.6"/>
 <path d="M38.3 518.3 H47.5 V522 Q43 524.5 38.3 523 Z" fill="#4a9fe0"/>
 <path d="M39.5 521.5 L41.5 519.8 L43 522 Z" fill="#e8f4fb"/>
 <path d="M41.5 526.8 L49.6 518.9" stroke="#3e3e3e" stroke-width="2.3" stroke-linecap="round"/>
 <rect x="38" y="530" width="10.4" height="0.8" fill="#9a9a9a"/>
</svg>
<div class="a" style="left:65.5px;top:517.9px;font-size:12.2px;line-height:14px;color:#222">Internet Control Message Protocol: Protocol</div>
<div class="a" style="left:726px;top:517px;width:1px;height:14.5px;background:#b0b0b0"></div>
<div class="a" style="left:729.5px;top:517px;width:1px;height:14.5px;background:#b0b0b0"></div>
<div class="a" style="left:763px;top:517.5px;font-size:11.6px;line-height:14px;color:#222">: 7177 · Displayed: 8 (0.1%)</div>
<!-- badge -->
<div class="a" style="left:946.5px;top:503.1px;width:62.7px;height:27.8px;background:#fcc02c;border-radius:3.5px"></div>
<div class="a" style="left:1011.7px;top:503.3px;width:63px;height:27.4px;background:#ff0000;border-radius:3.5px"></div>
<svg class="a" style="left:0;top:0" width="1080" height="542" viewBox="0 0 1080 542">
 <g fill="none" stroke="#0a0a0a" stroke-width="2.7" stroke-linecap="butt" stroke-linejoin="miter">
  <g transform="translate(950,508)">
   <path d="M2.2 1.5 V11 Q2.2 15.5 0.8 17.8"/>
   <path d="M1 1.5 H7.3 V17.8 L5.3 16.8"/>
   <path d="M2.2 6.2 H7 M2.2 10.8 H7"/>
   <path d="M10.2 0.2 V18"/>
   <path d="M9 1.5 H16 V6 L14 6.3"/>
   <path d="M10.2 9 H16.3 Q14.8 14.5 10.8 17.8"/>
   <path d="M12 10.5 Q13.8 15.5 17.8 17.3"/>
  </g>
  <g transform="translate(968.5,508)">
   <path d="M6.5 0.3 Q5 3.5 1 6"/>
   <path d="M5.2 2.6 H14 Q10.5 8.2 1 10"/>
   <path d="M6.8 4.8 Q10.5 8.5 17.5 9.2"/>
   <path d="M2.2 12.4 H15.5 Q15.5 17.6 12 17.6"/>
   <path d="M9.2 9.8 Q8.8 15.8 1.5 18"/>
  </g>
  <g transform="translate(988,508)">
   <rect x="1.6" y="1.3" width="6" height="4.6"/>
   <rect x="10.6" y="1.3" width="6" height="4.6"/>
   <path d="M0.3 9 H17.7"/>
   <path d="M9.2 6.5 Q8.2 9.5 2.5 12"/>
   <path d="M9.6 9.2 Q12 11.5 16.5 12.2"/>
   <rect x="1.6" y="13.2" width="6" height="4.5"/>
   <rect x="10.6" y="13.2" width="6" height="4.5"/>
  </g>
 </g>
 <g fill="none" stroke="#ffffff" stroke-width="2.4" stroke-linecap="butt" stroke-linejoin="miter">
  <g transform="translate(1015,508)">
   <path d="M0.5 6.3 H17.5"/>
   <path d="M9 0 V6.5 Q8.5 13.5 1 17.5"/>
   <path d="M9.6 8.5 Q12 14.5 17.5 17.3"/>
  </g>
  <g transform="translate(1034.3,508)">
   <path d="M0.5 4.6 H17.5"/>
   <path d="M9 0 V18"/>
   <path d="M8.4 5.5 Q5.8 11 0.8 14.5"/>
   <path d="M9.6 5.5 Q12.2 11 17.2 14.5"/>
   <path d="M4.8 13.3 H13.2"/>
  </g>
  <g transform="translate(1053.3,508)">
   <path d="M0.5 2.3 H17.5"/>
   <path d="M5.8 0 V4.6 M12.2 0 V4.6"/>
   <path d="M1.5 9 V6 H16.5 V9"/>
   <rect x="4.8" y="8.2" width="8.4" height="3.3"/>
   <rect x="3.2" y="13.8" width="11.6" height="3.8"/>
  </g>
 </g>
</svg>
<svg class="a" style="left:0;top:0" width="1080" height="542" viewBox="0 0 1080 542">
<path transform="translate(35.40,9.00) scale(0.980,1.040)" d="M0.5 0.7 H9.5 M5 0.7 V9.5 M5 4.8 H8.5 M1.8 3.8 V9.5 M0 9.5 H10" stroke="#7a7a7a" stroke-width="1.0" vector-effect="non-scaling-stroke" fill="none"/>
<path transform="translate(46.25,9.00) scale(0.980,1.040)" d="M0.5 2.5 H9.5 M4.5 0 Q3.5 5 0.5 8 M2.5 5 V10 M4.5 6 H9 M6.7 3.5 V9.5 M4 9.5 H10" stroke="#7a7a7a" stroke-width="1.0" vector-effect="non-scaling-stroke" fill="none"/>
<path transform="translate(56.90,9.00) scale(0.980,1.040)" d="M0 3.5 H3.5 M2 0 V9.5 L1 9.5 M0 7.5 L3.5 6 M4 2 H10 M8.5 0 L9.3 1.2 M4.8 4 V10 M4.8 4 H9.5 V10 M4.8 6.5 H9.5 M4.8 8.5 H9.5 M7.2 0.5 V10" stroke="#7a7a7a" stroke-width="1.0" vector-effect="non-scaling-stroke" fill="none"/>
<path transform="translate(68.20,9.00) scale(0.980,1.040)" d="M0.5 1.5 H9.5 M3 0 V2.8 M7 0 V2.8 M0.5 4 Q1.5 5 2.5 4.5 M2 3.5 V10 M0.5 8 L2.5 6.5 M3.5 5.8 H10 M6.7 3.5 V5.8 Q6 8.5 3.5 10 M7 6.5 Q8 9 10 10 M8.5 3.8 L9.3 4.6" stroke="#7a7a7a" stroke-width="1.0" vector-effect="non-scaling-stroke" fill="none"/>
<path transform="translate(83.30,9.00) scale(0.980,1.040)" d="M1 1 V8.5 L4 6.5 M3 2.5 L4.5 4.5 M8 0.5 Q8 6 2 10 M6.5 6.5 L9.8 10" stroke="#7a7a7a" stroke-width="1.0" vector-effect="non-scaling-stroke" fill="none"/>
<path transform="translate(93.75,9.00) scale(0.980,1.040)" d="M0.5 3.5 H9.5 M5 0 V3.5 Q4.5 7.5 0.5 10 M5.3 4.5 Q6.5 8 9.8 10 M3.5 7.8 L4.5 9" stroke="#7a7a7a" stroke-width="1.0" vector-effect="non-scaling-stroke" fill="none"/>
<path transform="translate(105.40,9.00) scale(0.980,1.040)" d="M1 10 V0.8 H9 V9.5 L8 9.2 M2.5 3 L5 6.5 M5 3 L2.5 8 M5.5 3 L8 6.5 M8 3 L5.5 8" stroke="#7a7a7a" stroke-width="1.0" vector-effect="non-scaling-stroke" fill="none"/>
<path transform="translate(15.00,33.50) scale(0.960,0.940)" d="M5 0 V1.5 M0.5 2.2 H9.5 M2.5 2.2 Q4.5 7.5 9.8 10 M7.5 2.2 Q5.5 7.5 0.2 10" stroke="#8e8e8e" stroke-width="0.95" vector-effect="non-scaling-stroke" fill="none"/>
<path transform="translate(25.90,33.50) scale(0.960,0.940)" d="M2.5 0 Q2 3 0.3 5 M1.7 3 V10 M4.5 0.8 Q4.3 2.5 3.5 3.5 M4 2.5 H9.5 M3.5 6 H10 M7 0 V10" stroke="#8e8e8e" stroke-width="0.95" vector-effect="non-scaling-stroke" fill="none"/>
<path transform="translate(64.90,33.50) scale(0.960,0.940)" d="M2.5 0 L0.8 3 L3 3.5 L0.5 6.5 L3.5 6 M0.5 9.5 L3.5 8 M5.5 0.2 L6.8 0.8 M4.5 1.5 H9.5 V3.5 H4.5 M4.5 1.5 V10 M5.5 5 H9.5 V10 M5.5 5 V10 M7.5 5 V10 M5.5 7.5 H9.5" stroke="#8e8e8e" stroke-width="0.95" vector-effect="non-scaling-stroke" fill="none"/>
<path transform="translate(75.80,33.50) scale(0.960,0.940)" d="M0.5 1.5 H4 M2 0 L1 5.5 H4 M2.8 3.5 V10 M0.5 7.5 H4 M5 0.5 H9 V2.5 H5 Z M4.5 4 H10 M5.5 4 V9 M9 4 V10 M5.5 6 H9 M5.5 8 H9 M4.5 10 H10" stroke="#8e8e8e" stroke-width="0.95" vector-effect="non-scaling-stroke" fill="none"/>
<path transform="translate(115.60,33.50) scale(0.960,0.940)" d="M1.5 0 L2 1 M0.3 2.5 H3.5 L0.5 6.5 M2 5 V10 M3 5.5 L3.8 6.5 M4.5 0.8 H9 V6.5 M4.5 0.8 V6.5 M6.8 2.5 Q6.5 8 4 10 M7.5 5 V9.5 H10 V8" stroke="#8e8e8e" stroke-width="0.95" vector-effect="non-scaling-stroke" fill="none"/>
<path transform="translate(126.50,33.50) scale(0.960,0.940)" d="M0.5 0.5 H9.5 V10 H0.5 Z M3.5 2 L2.2 3.5 M3.3 2.5 H6.5 Q5 5 2 6.5 M4 3.5 Q5.5 5.5 8 6.5 M4.5 7 L5.5 7.5 M4 8.5 L6 9" stroke="#8e8e8e" stroke-width="0.95" vector-effect="non-scaling-stroke" fill="none"/>
<path transform="translate(166.50,33.50) scale(0.960,0.940)" d="M0.5 0.5 H3.5 V3.5 H0.5 Z M2 3.5 V9 M2 6 H3.5 M0.5 5 V9.5 L3.8 8.5 M5.8 0 V10 M8 0 V9 Q8 10 10 10 M4.5 3 L5.5 4 M4 7.5 L5.8 6 M9.8 2.5 L8.5 4 M8.2 6 L10 7.5" stroke="#8e8e8e" stroke-width="0.95" vector-effect="non-scaling-stroke" fill="none"/>
<path transform="translate(177.40,33.50) scale(0.960,0.940)" d="M0.5 1.5 H4 M2 0 L1 5.5 H4 M2.8 3.5 V10 M0.5 7.5 H4 M4.5 2 H9.5 M4.5 4.5 H10 M7 0 L6 6.5 H9.5 L7 9 M6.5 8 L8.5 10" stroke="#8e8e8e" stroke-width="0.95" vector-effect="non-scaling-stroke" fill="none"/>
<path transform="translate(219.30,33.50) scale(0.960,0.940)" d="M0 3.5 H3.5 M2 0 V9.5 L1 9.5 M0 7.5 L3.5 6 M4 2 H10 M8.5 0 L9.3 1.2 M4.8 4 V10 M4.8 4 H9.5 V10 M4.8 6.5 H9.5 M4.8 8.5 H9.5 M7.2 0.5 V10" stroke="#8e8e8e" stroke-width="0.95" vector-effect="non-scaling-stroke" fill="none"/>
<path transform="translate(230.20,33.50) scale(0.960,0.940)" d="M0.5 1.5 H9.5 M3 0 V2.8 M7 0 V2.8 M0.5 4 Q1.5 5 2.5 4.5 M2 3.5 V10 M0.5 8 L2.5 6.5 M3.5 5.8 H10 M6.7 3.5 V5.8 Q6 8.5 3.5 10 M7 6.5 Q8 9 10 10 M8.5 3.8 L9.3 4.6" stroke="#8e8e8e" stroke-width="0.95" vector-effect="non-scaling-stroke" fill="none"/>
<path transform="translate(271.00,33.50) scale(0.960,0.940)" d="M3.5 0.5 Q2.5 3 0.2 5 M6 0.5 Q7.5 3 9.8 5 M2 5.5 H8 Q8 10 6.5 9.5 M4.5 5.5 Q4 8.5 1.5 10" stroke="#8e8e8e" stroke-width="0.95" vector-effect="non-scaling-stroke" fill="none"/>
<path transform="translate(281.90,33.50) scale(0.960,0.940)" d="M0.2 2.5 H4 M2.2 0 V10 M2 3 L0.2 7 M2.5 3.5 L4 5 M9.5 0.5 Q7 1.5 5 1.5 V6 Q5 9 4 10 M5 4.5 H10 M7.8 4.5 V10" stroke="#8e8e8e" stroke-width="0.95" vector-effect="non-scaling-stroke" fill="none"/>
<path transform="translate(322.00,33.50) scale(0.960,0.940)" d="M2.5 0 L0.8 3 L3 3.5 L0.5 6.5 L3.5 6 M0.5 9.5 L3.5 8 M7 0 L7.5 1 M4.5 1.8 H10 M6.5 2 L5 4.5 H9.5 L9 3.5 M6.5 5.5 Q6.5 9 4.5 10 M8 5.5 V9.5 H10 V8.5" stroke="#8e8e8e" stroke-width="0.95" vector-effect="non-scaling-stroke" fill="none"/>
<path transform="translate(332.90,33.50) scale(0.960,0.940)" d="M1 0.5 L2 1.5 M0.2 3.5 H2 V9 L3.5 7.5 M3.8 4 H10 M7 0 V10" stroke="#8e8e8e" stroke-width="0.95" vector-effect="non-scaling-stroke" fill="none"/>
<path transform="translate(373.20,33.50) scale(0.960,0.940)" d="M1 2 H9 V7 H1 Z M1 4.5 H9 M5 0 V9 Q5 10 6 10 H10 V8.5" stroke="#8e8e8e" stroke-width="0.95" vector-effect="non-scaling-stroke" fill="none"/>
<path transform="translate(384.10,33.50) scale(0.960,0.940)" d="M1 0.5 L2 1.5 M0.2 3.5 H2 V9 L3.5 7.5 M9.5 0.3 L4.5 1.5 M4 3.5 H10 M7 1.2 V6 M5 6 H9 V10 H5 Z" stroke="#8e8e8e" stroke-width="0.95" vector-effect="non-scaling-stroke" fill="none"/>
<path transform="translate(423.10,33.50) scale(0.960,0.940)" d="M1 1 H9 M0.3 4.5 H9.7 M5.5 1 Q5 7 0.5 10 M6.5 4.5 V9 Q6.5 10 7.5 10 H10 V8" stroke="#8e8e8e" stroke-width="0.95" vector-effect="non-scaling-stroke" fill="none"/>
<path transform="translate(434.00,33.50) scale(0.960,0.940)" d="M2.5 0 L0.8 3 L3 3.5 L0.5 6.5 L3.5 6 M0.5 9.5 L3.5 8 M4.5 3 L9.5 2 M4 6 L10 5 M6 0 Q7 6.5 10 10 M9.5 6.5 L6 10 M8.5 0.5 L9.5 1.5" stroke="#8e8e8e" stroke-width="0.95" vector-effect="non-scaling-stroke" fill="none"/>
<path transform="translate(478.10,33.50) scale(0.960,0.940)" d="M1 1 H9 M5 1 V9.5 M0.3 9.5 H9.7" stroke="#8e8e8e" stroke-width="0.95" vector-effect="non-scaling-stroke" fill="none"/>
<path transform="translate(489.00,33.50) scale(0.960,0.940)" d="M2 0.5 H8 V7 H2 Z M2 2.7 H8 M2 4.8 H8 M0.3 7.5 H9.7 M3.5 8.3 L1.5 10 M6.5 8.3 L8.5 10" stroke="#8e8e8e" stroke-width="0.95" vector-effect="non-scaling-stroke" fill="none"/>
<path transform="translate(529.00,33.50) scale(0.960,0.940)" d="M0.5 1.5 H4.5 M0.5 3.5 H4.5 M2.5 0 V5.5 Q2 6 0.5 6.5 M5.8 0.5 V6 M5.8 0.5 H8 L6.8 2.8 L8.2 4.2 L6.8 5.5 M2 7 V10 M2 7 H8 V9.5 M5 5.8 V10" stroke="#8e8e8e" stroke-width="0.95" vector-effect="non-scaling-stroke" fill="none"/>
<path transform="translate(539.90,33.50) scale(0.960,0.940)" d="M0.5 0.5 H4 V8.5 H0.5 Z M0.5 3 H4 M0.5 5.7 H4 M0 9.5 L4.5 8 M5 3 H9.5 Q9.5 10 8 9.5 M7.2 0 Q7 6 4.5 10" stroke="#8e8e8e" stroke-width="0.95" vector-effect="non-scaling-stroke" fill="none"/>
<path transform="translate(740.60,519.90) scale(1.000,0.970)" d="M3.5 0.5 Q2.5 3 0.2 5 M6 0.5 Q7.5 3 9.8 5 M2 5.5 H8 Q8 10 6.5 9.5 M4.5 5.5 Q4 8.5 1.5 10" stroke="#3a3a3a" stroke-width="1.1" vector-effect="non-scaling-stroke" fill="none"/>
<path transform="translate(751.80,519.90) scale(1.000,0.970)" d="M2.5 0 L0.8 3 L3 3.5 L0.5 6.5 L3.5 6 M0.5 9.5 L3.5 8 M5 0.5 H9 V9.5 H5 Z M5 3.5 H9 M5 6.5 H9 M4 9.8 H10" stroke="#3a3a3a" stroke-width="1.1" vector-effect="non-scaling-stroke" fill="none"/>
</svg>
</body></html>
